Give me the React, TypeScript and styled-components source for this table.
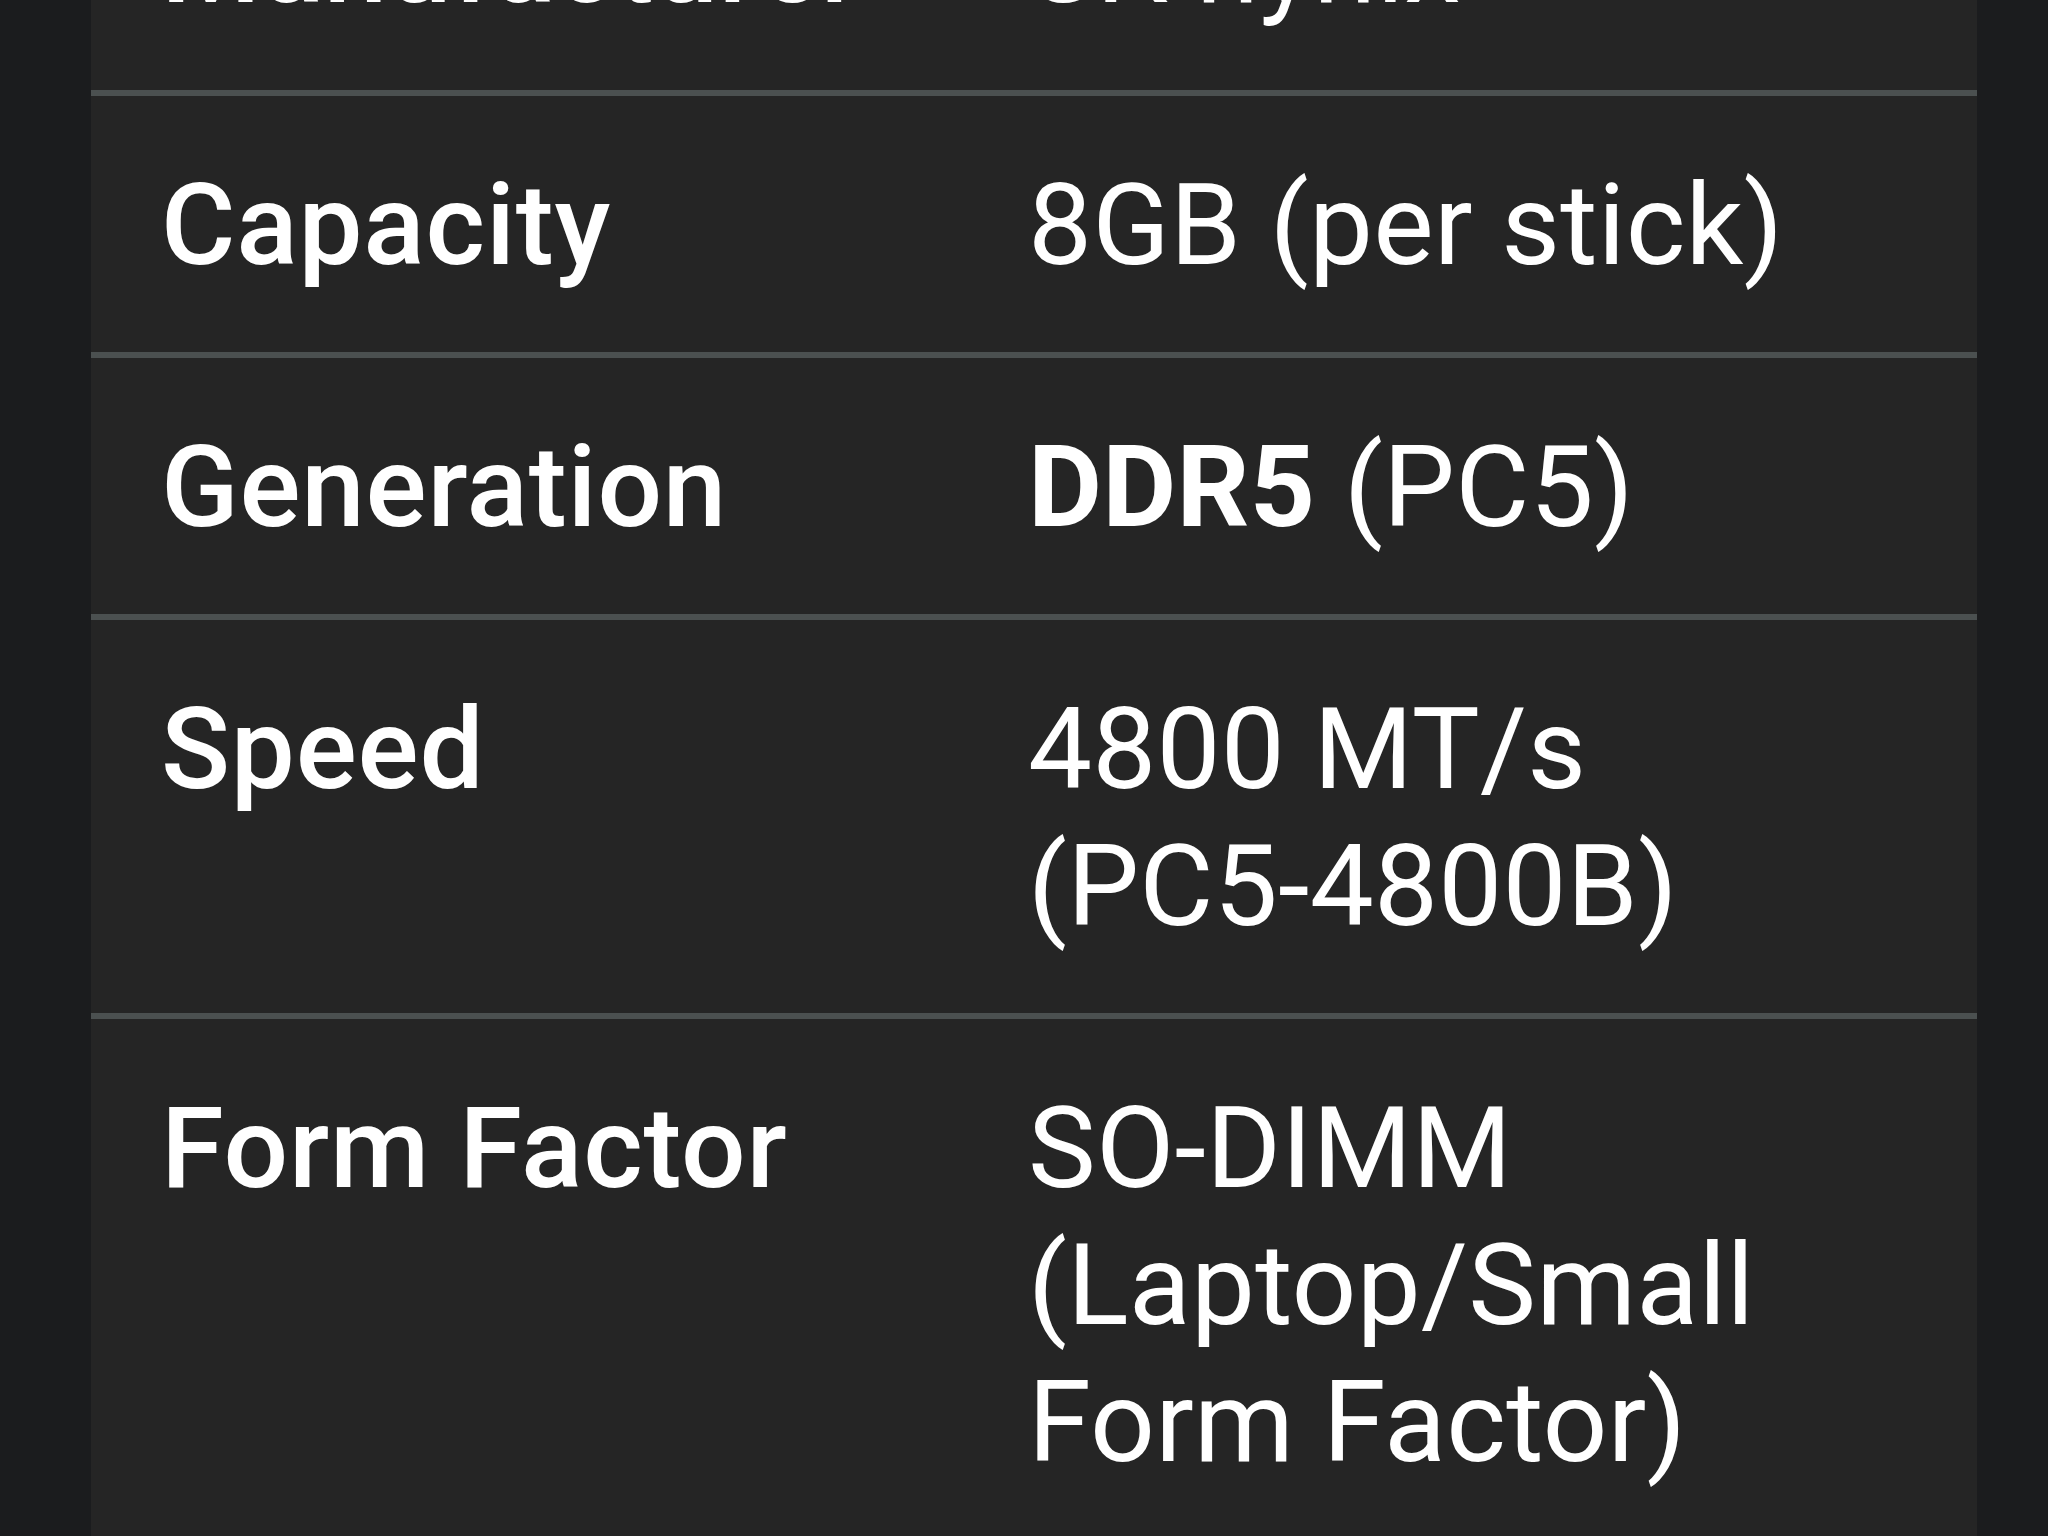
import React from "react";
import styled, { createGlobalStyle } from "styled-components";

const GlobalStyle = createGlobalStyle`
  html, body {
    margin: 0;
    padding: 0;
    background: #1b1c1e;
    height: 1536px;
    overflow: hidden;
  }
  body {
    font-family: Roboto, "Noto Sans", "Liberation Sans", sans-serif;
    color: #ffffff;
  }
`;

const Page = styled.div`
  height: 1536px;
  overflow: hidden;
  padding: 0 71px 0 91px;
  box-sizing: border-box;
`;

const Table = styled.div`
  margin-top: -166px;
  background: #252525;
  display: flex;
  flex-direction: column;
`;

const Row = styled.div`
  display: grid;
  grid-template-columns: 867px 800px;
  padding: 61px 70px 58px 70px;
  border-bottom: 6px solid #4b5050;
  font-size: 114px;
  line-height: 137px;
`;

const Label = styled.div`
  font-weight: 500;
  letter-spacing: 0.8px;
`;

const Value = styled.div`
  font-weight: 400;
  letter-spacing: 0.2px;

  b {
    font-weight: 700;
  }
`;

type Spec = { label: string; value: React.ReactNode };

const specs: Spec[] = [
  { label: "Manufacturer", value: "SK hynix" },
  { label: "Capacity", value: "8GB (per stick)" },
  {
    label: "Generation",
    value: (
      <>
        <b>DDR5</b> (PC5)
      </>
    ),
  },
  { label: "Speed", value: "4800 MT/s (PC5-4800B)" },
  { label: "Form Factor", value: "SO-DIMM (Laptop/Small Form Factor)" },
];

export default function App() {
  return (
    <>
      <GlobalStyle />
      <Page>
        <Table>
          {specs.map((s) => (
            <Row key={s.label}>
              <Label>{s.label}</Label>
              <Value>{s.value}</Value>
            </Row>
          ))}
        </Table>
      </Page>
    </>
  );
}
